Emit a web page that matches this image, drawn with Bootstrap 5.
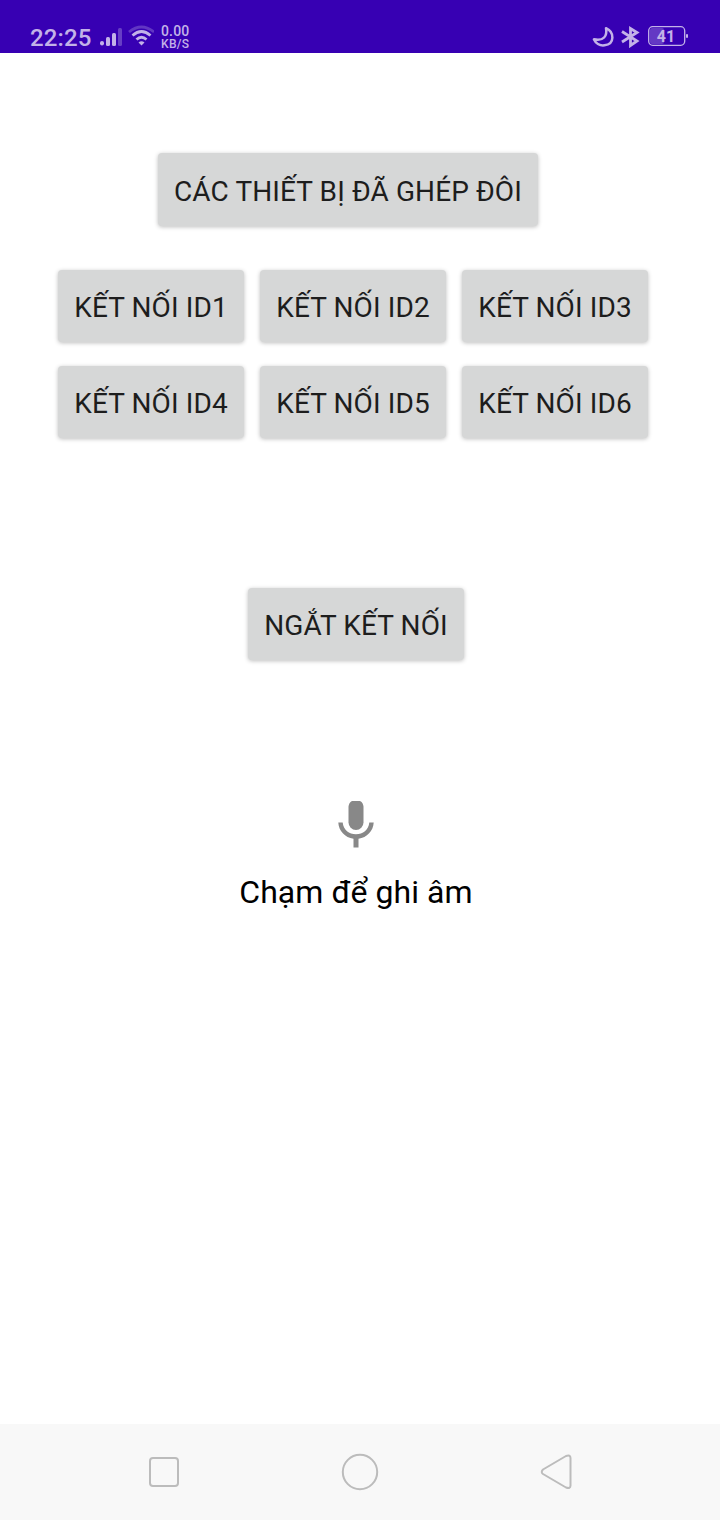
<!DOCTYPE html>
<html lang="vi">
<head>
<meta charset="utf-8">
<meta name="viewport" content="width=device-width, initial-scale=1">
<title>Bluetooth</title>
<link href="https://cdn.jsdelivr.net/npm/bootstrap@5.3.0/dist/css/bootstrap.min.css" rel="stylesheet">
<style>
  body { font-family: Roboto, sans-serif; background: #fff; color: #000; }
  .screen { width: 720px; height: 1520px; overflow: hidden; }
  .status-bar { height: 53px; background: #3700b3; color: #c3b2e8; padding: 20px 32px 0 30px; }
  .status-bar svg { display: block; flex: none; }
  .clock { font-size: 24px; line-height: 36px; font-weight: 500; width: 70px; letter-spacing: .15px; }
  .speed { font-size: 14px; line-height: 12px; font-weight: 500; padding-top: 5px; margin-left: 7px; letter-spacing: .15px; }
  .speed small { display: block; font-size: 12px; line-height: 14px; font-weight: 500; letter-spacing: .3px; }
  .btn-android { --bs-btn-bg: #d6d7d7; --bs-btn-color: #1d1d1d; --bs-btn-border-width: 0;
    --bs-btn-hover-bg: #c8c9c9; --bs-btn-active-bg: #bcbdbd; --bs-btn-border-radius: 4px;
    --bs-btn-padding-x: 0; --bs-btn-padding-y: 0;
    height: 73px; font-size: 28px; line-height: 78px; white-space: nowrap; letter-spacing: .1px;
    box-shadow: 0 1px 4px rgba(0,0,0,.26); }
  .paired { width: 380px; margin: 100px 0 0 158px; height: 73px; }
  .ids { display: grid; grid-template-columns: repeat(3, 186px); column-gap: 16px; row-gap: 24px; margin: 44px 0 0 58px; }
  .ids .btn, .disconnect { height: 72px; line-height: 76px; }
  .disconnect { width: 216px; margin: 150px 0 0 248px; }
  .record { width: 240px; margin: 138px 0 0 236px; }
  .record span { font-size: 32px; line-height: 40px; letter-spacing: .05px; }
  .nav-keys { height: 96px; background: #f8f8f8; }
</style>
</head>
<body>
<div class="screen d-flex flex-column">
  <header class="status-bar d-flex align-items-start">
    <div class="clock">22:25</div>
    <svg width="22" height="27" viewBox="0 0 22 27" fill="currentColor">
      <rect x="0" y="21" width="4" height="4.5" rx="2"/><rect x="6" y="17" width="4" height="9" rx="1.5"/>
      <rect x="12" y="13" width="4" height="13" rx="1.5"/><rect x="18" y="8" width="4" height="18" rx="1.5" opacity=".35"/>
    </svg>
    <svg width="26" height="27" viewBox="0 0 26 27" fill="none" stroke="currentColor" stroke-width="2.8" style="margin-left:6px">
      <path d="M1 12Q13.500 2 26 12" opacity=".3"/>
      <path d="M4.500 15.500Q13.500 7.500 22.500 15.500M8.500 19.500Q13.500 15 18.500 19.500"/>
      <path d="M10.500 22.500Q13.500 20 16.500 22.500L13.500 25.500Z" fill="currentColor" stroke="none"/>
    </svg>
    <div class="speed">0.00<small>KB/S</small></div>
    <svg class="ms-auto" width="23" height="28" viewBox="0 0 23 28" fill="none" stroke="currentColor" stroke-width="2.5" stroke-linejoin="round">
      <path d="M14 8.200C22.500 12 23 24 12.500 25.300C7.500 26 3.500 23 1.900 19.300C11.500 21.500 15.500 16 14 8.200Z"/>
    </svg>
    <svg width="20" height="28" viewBox="0 0 20 28" fill="none" stroke="currentColor" stroke-width="2.8" style="margin-left:5px;margin-right:8px">
      <path d="M2 11.500L17 21L10.500 25.500V8.500L17 12.500L2 22"/>
    </svg>
    <svg width="40" height="28" viewBox="0 0 40 28">
      <rect x="2" y="8" width="14" height="16" rx="2" fill="#c3b2e8" opacity=".32"/>
      <rect x=".7" y="6.700" width="36" height="18.600" rx="4" fill="none" stroke="#c3b2e8" stroke-width="1.300"/>
      <rect x="38" y="14" width="2" height="4" rx="1" fill="#c3b2e8"/>
      <text x="18" y="21.700" text-anchor="middle" font-family="Roboto, sans-serif" font-size="16" font-weight="700" fill="#c3b2e8">41</text>
    </svg>
  </header>

  <main class="flex-grow-1 d-flex flex-column align-items-start">
    <button type="button" class="btn btn-android paired">CÁC THIẾT BỊ ĐÃ GHÉP ĐÔI</button>
    <div class="ids">
      <button type="button" class="btn btn-android">KẾT NỐI ID1</button>
      <button type="button" class="btn btn-android">KẾT NỐI ID2</button>
      <button type="button" class="btn btn-android">KẾT NỐI ID3</button>
      <button type="button" class="btn btn-android">KẾT NỐI ID4</button>
      <button type="button" class="btn btn-android">KẾT NỐI ID5</button>
      <button type="button" class="btn btn-android">KẾT NỐI ID6</button>
    </div>
    <button type="button" class="btn btn-android disconnect">NGẮT KẾT NỐI</button>
    <div class="record d-flex flex-column align-items-center">
      <svg width="36" height="50" viewBox="0 0 36 50" fill="#888">
        <path d="M14 3H22Q25.500 4.500 25.500 10V24.500A7.500 7.500 0 0 1 10.500 24.500V10Q10.500 4.500 14 3Z"/>
        <path d="M.3 24.500H4.700C5.500 32 11 36.300 18 36.300S30.500 32 31.300 24.500H35.700C35.300 33 29 39.500 20.500 40.800V49.500H15.500V40.800C7 39.500 .7 33 .3 24.500Z"/>
      </svg>
      <span class="mt-4">Chạm để ghi âm</span>
    </div>
  </main>

  <nav class="nav-keys d-flex align-items-center">
    <svg width="720" height="96" viewBox="0 0 720 96" fill="none" stroke="#bcbcbc" stroke-width="2" stroke-linejoin="round">
      <rect x="150" y="34" width="28" height="28" rx="3"/>
      <circle cx="360" cy="48" r="17.200"/>
      <path d="M543 45.500L566 32Q570.500 30.500 570.500 34V61.500Q570.500 65 566 63.500L543 50Q540.500 48 543 45.500Z"/>
    </svg>
  </nav>
</div>
<script src="https://cdn.jsdelivr.net/npm/bootstrap@5.3.0/dist/js/bootstrap.bundle.min.js"></script>
</body>
</html>
